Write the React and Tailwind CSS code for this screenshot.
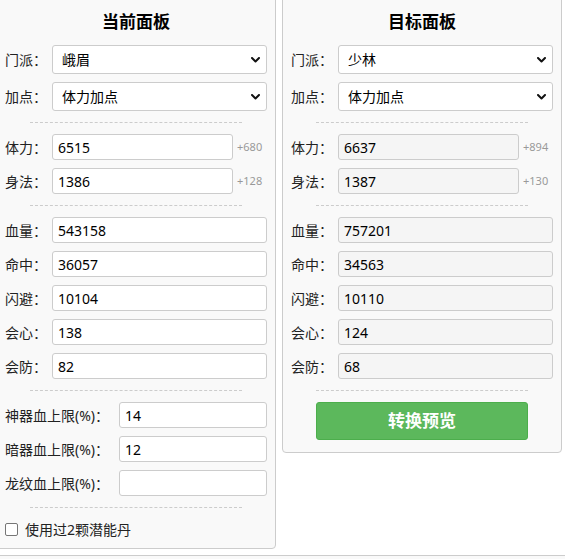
import React from 'react';

const Chevron = () => (
    <svg className="pointer-events-none absolute right-[7px] top-1/2 -translate-y-1/2" width="9" height="6" viewBox="0 0 9 6" fill="none">
        <path d="M1 1 L4.5 4.5 L8 1" stroke="#111" strokeWidth="2" strokeLinecap="round" strokeLinejoin="round" />
    </svg>
);

const Sep = () => <div className="mx-[25px] my-[11px] border-t border-dashed border-[#ccc]" />;

const SelectRow = ({ label, value, options }) => (
    <div className="flex items-center">
        <span className="w-[47px] shrink-0 text-[14px] text-[#222]">{label}</span>
        <div className="relative flex-1">
            <select defaultValue={value} className="block h-[29px] w-full appearance-none rounded-[3px] border border-[#ccc] bg-white pl-[9px] text-[14px] text-black">
                {options.map(o => <option key={o}>{o}</option>)}
            </select>
            <Chevron />
        </div>
    </div>
);

const InputRow = ({ label, value, extra, readOnly, labelW = 'w-[47px]' }) => (
    <div className="flex items-center">
        <span className={`${labelW} shrink-0 whitespace-nowrap text-[14px] text-[#222]`}>{label}</span>
        <input
            readOnly={readOnly}
            defaultValue={value}
            className={`h-[26px] min-w-0 flex-1 rounded-[3px] border border-[#ccc] pl-[5px] text-[14px] text-black ${readOnly ? 'bg-[#f5f5f5]' : 'bg-white'}`}
        />
        {extra !== undefined && <span className="w-[34px] shrink-0 pl-[4px] text-[11px] text-[#999]">{extra}</span>}
    </div>
);

const schools = ['峨眉', '少林', '武当', '丐帮', '天山'];
const points = ['体力加点', '身法加点', '均衡加点'];

const Panel = ({ title, school, side }) => {
    const ro = side === 'target';
    const d = ro
        ? { hp: '6637', hpx: '+894', sf: '1387', sfx: '+130', xl: '757201', mz: '34563', sb: '10110', hx: '124', hf: '68' }
        : { hp: '6515', hpx: '+680', sf: '1386', sfx: '+128', xl: '543158', mz: '36057', sb: '10104', hx: '138', hf: '82' };
    return (
        <div className="w-[280px] shrink-0 rounded-[4px] border border-[#ccc] bg-[#f9f9f9] px-2 pt-2 pb-[9px]">
            <h3 className="mt-[11px] mb-[11px] text-center text-[17px] font-bold leading-[24px] text-black">{title}</h3>
            <div className="flex flex-col gap-2">
                <SelectRow label="门派：" value={school} options={schools} />
                <SelectRow label="加点：" value="体力加点" options={points} />
            </div>
            <Sep />
            <div className="flex flex-col gap-2">
                <InputRow label="体力：" value={d.hp} extra={d.hpx} readOnly={ro} />
                <InputRow label="身法：" value={d.sf} extra={d.sfx} readOnly={ro} />
            </div>
            <Sep />
            <div className="flex flex-col gap-2">
                <InputRow label="血量：" value={d.xl} readOnly={ro} />
                <InputRow label="命中：" value={d.mz} readOnly={ro} />
                <InputRow label="闪避：" value={d.sb} readOnly={ro} />
                <InputRow label="会心：" value={d.hx} readOnly={ro} />
                <InputRow label="会防：" value={d.hf} readOnly={ro} />
            </div>
            <Sep />
            {ro ? (
                <button className="mx-[25px] mt-px mb-[3px] block h-[38px] w-[212px] rounded-[3px] border border-[#4cae4c] bg-[#5cb85c] text-[17px] font-bold text-white">
                    转换预览
                </button>
            ) : (
                <>
                    <div className="flex flex-col gap-2">
                        <InputRow label="神器血上限(%)：" value="14" labelW="w-[114px]" />
                        <InputRow label="暗器血上限(%)：" value="12" labelW="w-[114px]" />
                        <InputRow label="龙纹血上限(%)：" value="" labelW="w-[114px]" />
                    </div>
                    <Sep />
                    <label className="flex h-[20px] items-center gap-[7px] text-[14px] text-[#222]">
                        <input type="checkbox" className="h-[13px] w-[13px] appearance-none rounded-[2px] border border-[#767676] bg-white" />
                        使用过2颗潜能丹
                    </label>
                </>
            )}
        </div>
    );
};

export default function App() {
    return (
        <div className="h-[559px] overflow-hidden bg-white font-['Noto_Sans','Noto_Sans_CJK_SC',sans-serif]">
            <div className="-mt-[10px] -ml-[4px] flex items-start gap-[6px]">
                <Panel title="当前面板" school="峨眉" side="current" />
                <Panel title="目标面板" school="少林" side="target" />
            </div>
            <div className="-mx-2 mt-[6px] h-10 rounded-[4px] border border-[#ccc] bg-[#f9f9f9]" />
        </div>
    );
}
